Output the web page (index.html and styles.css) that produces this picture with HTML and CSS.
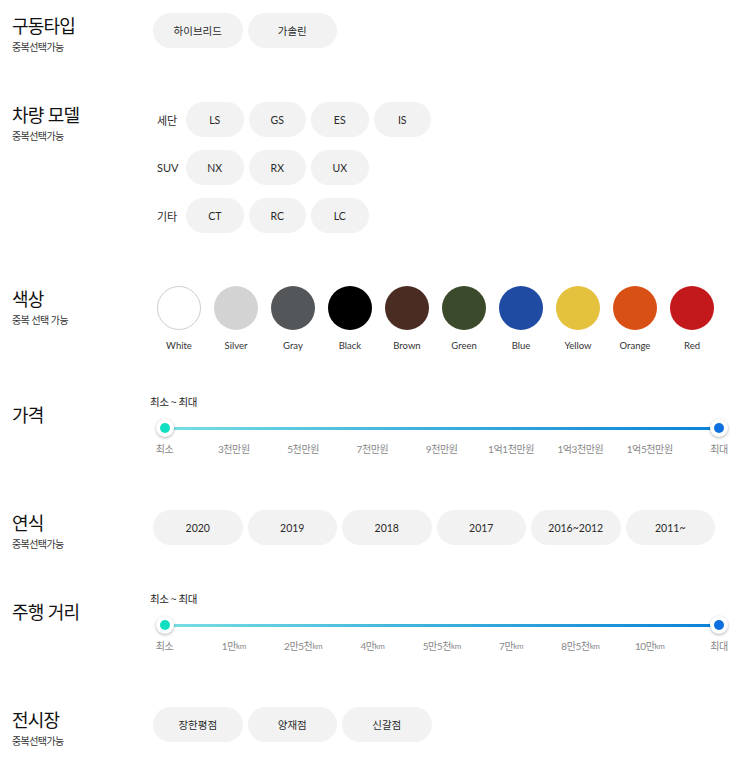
FILE: index.html
```html
<!DOCTYPE html>
<html lang="ko">
<head>
<meta charset="utf-8">
<title>필터</title>
<link rel="stylesheet" href="styles.css">
</head>
<body>
<div class="filters">

  <section class="sec sec-drive">
    <div class="head"><h2 class="title">구동타입</h2><p class="sub">중복선택가능</p></div>
    <div class="body">
      <div class="pills wide">
        <button class="pill">하이브리드</button>
        <button class="pill">가솔린</button>
      </div>
    </div>
  </section>

  <section class="sec sec-model">
    <div class="head"><h2 class="title">차량 모델</h2><p class="sub">중복선택가능</p></div>
    <div class="body models">
      <div class="mrow"><span class="mlabel">세단</span><div class="pills narrow"><button class="pill">LS</button><button class="pill">GS</button><button class="pill">ES</button><button class="pill">IS</button></div></div>
      <div class="mrow"><span class="mlabel">SUV</span><div class="pills narrow"><button class="pill">NX</button><button class="pill">RX</button><button class="pill">UX</button></div></div>
      <div class="mrow"><span class="mlabel">기타</span><div class="pills narrow"><button class="pill">CT</button><button class="pill">RC</button><button class="pill">LC</button></div></div>
    </div>
  </section>

  <section class="sec sec-color">
    <div class="head"><h2 class="title">색상</h2><p class="sub">중복 선택 가능</p></div>
    <div class="body">
      <ul class="colors">
        <li class="color"><span class="dot c-white"></span><span class="cname">White</span></li>
        <li class="color"><span class="dot c-silver"></span><span class="cname">Silver</span></li>
        <li class="color"><span class="dot c-gray"></span><span class="cname">Gray</span></li>
        <li class="color"><span class="dot c-black"></span><span class="cname">Black</span></li>
        <li class="color"><span class="dot c-brown"></span><span class="cname">Brown</span></li>
        <li class="color"><span class="dot c-green"></span><span class="cname">Green</span></li>
        <li class="color"><span class="dot c-blue"></span><span class="cname">Blue</span></li>
        <li class="color"><span class="dot c-yellow"></span><span class="cname">Yellow</span></li>
        <li class="color"><span class="dot c-orange"></span><span class="cname">Orange</span></li>
        <li class="color"><span class="dot c-red"></span><span class="cname">Red</span></li>
      </ul>
    </div>
  </section>

  <section class="sec sec-price">
    <div class="head slider-head"><h2 class="title">가격</h2></div>
    <div class="body">
      <div class="slider">
        <div class="range">최소 ~ 최대</div>
        <div class="track-row">
          <div class="track"></div>
          <span class="thumb thumb-min"><span class="knob"></span></span>
          <span class="thumb thumb-max"><span class="knob"></span></span>
        </div>
        <div class="ticks">
          <span class="tick">최소</span><span class="tick">3천만원</span><span class="tick">5천만원</span><span class="tick">7천만원</span><span class="tick">9천만원</span><span class="tick">1억1천만원</span><span class="tick">1억3천만원</span><span class="tick">1억5천만원</span><span class="tick">최대</span>
        </div>
      </div>
    </div>
  </section>

  <section class="sec sec-year">
    <div class="head"><h2 class="title">연식</h2><p class="sub">중복선택가능</p></div>
    <div class="body">
      <div class="pills wide">
        <button class="pill">2020</button>
        <button class="pill">2019</button>
        <button class="pill">2018</button>
        <button class="pill">2017</button>
        <button class="pill">2016~2012</button>
        <button class="pill">2011~</button>
      </div>
    </div>
  </section>

  <section class="sec sec-km">
    <div class="head slider-head"><h2 class="title">주행 거리</h2></div>
    <div class="body">
      <div class="slider">
        <div class="range">최소 ~ 최대</div>
        <div class="track-row">
          <div class="track"></div>
          <span class="thumb thumb-min"><span class="knob"></span></span>
          <span class="thumb thumb-max"><span class="knob"></span></span>
        </div>
        <div class="ticks">
          <span class="tick">최소</span><span class="tick">1만<small>km</small></span><span class="tick">2만5천<small>km</small></span><span class="tick">4만<small>km</small></span><span class="tick">5만5천<small>km</small></span><span class="tick">7만<small>km</small></span><span class="tick">8만5천<small>km</small></span><span class="tick">10만<small>km</small></span><span class="tick">최대</span>
        </div>
      </div>
    </div>
  </section>

  <section class="sec sec-shop">
    <div class="head"><h2 class="title">전시장</h2><p class="sub">중복선택가능</p></div>
    <div class="body">
      <div class="pills wide">
        <button class="pill">장한평점</button>
        <button class="pill">양재점</button>
        <button class="pill">신갈점</button>
      </div>
    </div>
  </section>

</div>
</body>
</html>
```

FILE: styles.css
```css
* { box-sizing: border-box; }

html, body {
  margin: 0;
  padding: 0;
  background: #fff;
}

body {
  font-family: "Lato", "Noto Sans CJK KR", sans-serif;
  color: #111;
}

.filters {
  display: flex;
  flex-direction: column;
  padding: 13px 0 0 12px;
}

.sec {
  display: flex;
  align-items: flex-start;
}

.sec-model { margin-top: 48px; }
.sec-color { margin-top: 53px; }
.sec-price { margin-top: 41px; }
.sec-year { margin-top: 54px; }
.sec-km { margin-top: 40px; }
.sec-shop { margin-top: 54px; }

.head {
  width: 138px;
  flex: none;
}

.slider-head { padding-top: 8px; }

.title {
  margin: 0;
  font-family: "Noto Sans CJK KR", sans-serif;
  font-size: 18px;
  font-weight: 400;
  line-height: 24px;
  letter-spacing: -0.8px;
  color: #111;
}

.sub {
  margin: 3px 0 0;
  font-family: "Noto Sans CJK KR", sans-serif;
  font-size: 10px;
  line-height: 14px;
  letter-spacing: -0.6px;
  color: #333;
}

.body { flex: 1; }

.pills {
  display: flex;
  gap: 5px;
}

.pills.wide { margin-left: 3px; }

.pill {
  height: 35px;
  border: 0;
  border-radius: 18px;
  background: #f2f2f2;
  font-family: "Lato", "Noto Sans CJK KR", sans-serif;
  font-size: 10.5px;
  font-weight: 400;
  color: #2a2a2a;
  padding: 0;
  flex: none;
}

.wide .pill { width: 89.5px; }
.narrow .pill { width: 57.5px; }

.models {
  display: flex;
  flex-direction: column;
  gap: 13px;
}

.mrow {
  display: flex;
  align-items: center;
}

.mlabel {
  width: 36px;
  padding-left: 7px;
  font-family: "Lato", "Noto Sans CJK KR", sans-serif;
  font-size: 11px;
  color: #2a2a2a;
}

.colors {
  list-style: none;
  margin: 0 0 0 7px;
  padding: 0;
  display: flex;
  gap: 13px;
}

.color {
  width: 44px;
  display: flex;
  flex-direction: column;
  align-items: center;
}

.dot {
  width: 44px;
  height: 44px;
  border-radius: 50%;
  display: block;
}

.cname {
  margin-top: 9px;
  font-size: 9.5px;
  line-height: 14px;
  color: #333;
  white-space: nowrap;
}

.c-white { background: #fff; border: 1px solid #cfcfcf; }
.c-silver { background: #d3d3d3; }
.c-gray { background: #54575a; }
.c-black { background: #000; }
.c-brown { background: #4a2c23; }
.c-green { background: #3b4a2b; }
.c-blue { background: #1f4ba2; }
.c-yellow { background: #e4c23e; }
.c-orange { background: #d95015; }
.c-red { background: #c4191c; }

.slider { width: 590px; }

.range {
  font-family: "Noto Sans CJK KR", sans-serif;
  font-size: 10.5px;
  line-height: 16px;
  letter-spacing: -0.5px;
  color: #222;
}

.track-row {
  position: relative;
  height: 20px;
  margin: 8px 0 0 14.5px;
  width: 554.5px;
  display: flex;
  align-items: center;
}

.track {
  width: 100%;
  height: 3px;
  background: linear-gradient(90deg, #78dfe4 0%, #3fb3dc 45%, #0a82d8 100%);
}

.thumb {
  position: absolute;
  top: 1px;
  width: 18px;
  height: 18px;
  border-radius: 50%;
  background: #fff;
  box-shadow: 0 1px 3px rgba(0, 0, 0, 0.3);
  display: flex;
  align-items: center;
  justify-content: center;
}

.thumb-min { left: -9px; }
.thumb-max { right: -9px; }

.knob {
  width: 10px;
  height: 10px;
  border-radius: 50%;
}

.thumb-min .knob { background: #12dfc2; }
.thumb-max .knob { background: #0d6fe0; }

.ticks {
  display: flex;
  justify-content: space-between;
  margin: 4px 0 0 14.5px;
  width: 554.5px;
  line-height: 14px;
}

.tick {
  width: 0;
  display: flex;
  justify-content: center;
  white-space: nowrap;
  font-family: "Lato", "Noto Sans CJK KR", sans-serif;
  font-size: 10px;
  letter-spacing: -0.4px;
  color: #888;
}

.tick small {
  font-size: 8px;
  align-self: flex-end;
  line-height: 13px;
}
```
